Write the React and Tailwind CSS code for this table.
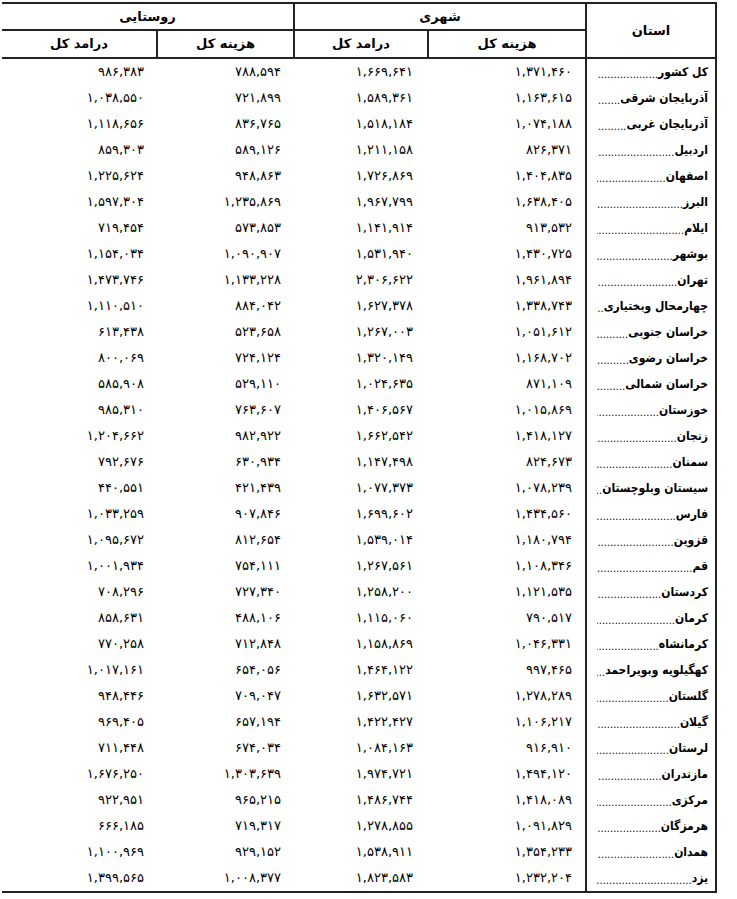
const fa = (s) => s.replace(/\d/g, (d) => "۰۱۲۳۴۵۶۷۸۹"[d]);

const rows = [
  ["کل کشور", "1,371,460", "1,669,641", "788,594", "986,383"],
  ["آذربایجان شرقی", "1,163,615", "1,589,361", "721,899", "1,038,550"],
  ["آذربایجان غربی", "1,074,188", "1,518,184", "836,765", "1,118,656"],
  ["اردبیل", "826,371", "1,211,158", "589,126", "859,303"],
  ["اصفهان", "1,404,835", "1,726,869", "948,863", "1,225,624"],
  ["البرز", "1,638,405", "1,967,799", "1,235,869", "1,597,304"],
  ["ایلام", "913,532", "1,141,914", "573,853", "719,454"],
  ["بوشهر", "1,430,725", "1,531,940", "1,090,907", "1,154,034"],
  ["تهران", "1,961,894", "2,306,622", "1,133,228", "1,473,746"],
  ["چهارمحال وبختیاری", "1,338,743", "1,627,378", "884,042", "1,110,510"],
  ["خراسان جنوبی", "1,051,612", "1,267,003", "523,658", "613,438"],
  ["خراسان رضوی", "1,168,702", "1,320,149", "724,124", "800,069"],
  ["خراسان شمالی", "871,109", "1,024,635", "529,110", "585,908"],
  ["خوزستان", "1,015,869", "1,406,567", "763,607", "985,310"],
  ["زنجان", "1,418,127", "1,662,542", "982,922", "1,204,662"],
  ["سمنان", "824,673", "1,147,498", "630,934", "792,676"],
  ["سیستان وبلوچستان", "1,078,239", "1,077,373", "421,439", "440,551"],
  ["فارس", "1,434,560", "1,699,602", "907,846", "1,033,259"],
  ["قزوین", "1,180,794", "1,539,014", "812,654", "1,095,672"],
  ["قم", "1,108,346", "1,267,561", "754,111", "1,001,934"],
  ["کردستان", "1,121,535", "1,258,200", "727,340", "708,296"],
  ["کرمان", "790,517", "1,115,060", "488,106", "858,631"],
  ["کرمانشاه", "1,046,331", "1,158,869", "712,848", "770,258"],
  ["کهگیلویه وبویراحمد", "997,465", "1,464,122", "654,056", "1,017,161"],
  ["گلستان", "1,278,289", "1,632,571", "709,047", "948,446"],
  ["گیلان", "1,106,217", "1,422,427", "657,194", "969,405"],
  ["لرستان", "916,910", "1,084,163", "674,034", "711,448"],
  ["مازندران", "1,494,120", "1,974,721", "1,303,639", "1,676,250"],
  ["مرکزی", "1,418,089", "1,486,744", "965,215", "922,951"],
  ["هرمزگان", "1,091,829", "1,278,855", "719,317", "666,185"],
  ["همدان", "1,354,233", "1,538,911", "929,152", "1,100,969"],
  ["یزد", "1,232,204", "1,823,583", "1,008,377", "1,399,565"],
];

// rough leader length so the dots fill the cell without spilling far past it
const leader = (name) => ".".repeat(Math.max(3, Math.min(34, Math.round((118 - name.length * 5.2) / 3.2))));

export default function App() {
  return (
    <div
      className="bg-white min-h-[899px] pt-[2px] pl-[2px] text-black"
      style={{ fontFamily: '"DejaVu Sans", sans-serif' }}
    >
      <div dir="rtl" className="w-[715px] border-t-2 border-r-2 border-b-2 border-[#222]">
        {/* header */}
        <div className="flex h-[55px] border-b-2 border-[#222] text-[13px] font-bold">
          <div className="w-[130px] border-l-2 border-[#222] flex items-center justify-center">
            استان
          </div>
          <div className="w-[292px] border-l-2 border-[#222] flex flex-col">
            <div className="h-[27px] border-b-2 border-[#222] flex items-center justify-center">
              شهری
            </div>
            <div className="flex flex-1">
              <div className="w-[158px] border-l-2 border-[#222] flex items-center justify-center">
                هزینه کل
              </div>
              <div className="flex-1 flex items-center justify-center">درامد کل</div>
            </div>
          </div>
          <div className="flex-1 flex flex-col">
            <div className="h-[27px] border-b-2 border-[#222] flex items-center justify-center">
              روستایی
            </div>
            <div className="flex flex-1">
              <div className="w-[137px] border-l-2 border-[#222] flex items-center justify-center">
                هزینه کل
              </div>
              <div className="flex-1 flex items-center justify-center">درامد کل</div>
            </div>
          </div>
        </div>

        {/* body */}
        {rows.map((r, i) => (
          <div key={i} className="flex h-[26px] text-[13px]">
            <div className="w-[130px] border-l-2 border-[#222] flex items-center pr-[7px] pl-[10px] overflow-hidden">
              <span
                className="font-bold whitespace-nowrap text-[12px]"
                style={{ fontFamily: '"DejaVu Sans Condensed", "DejaVu Sans", sans-serif' }}
              >
                {r[0]}
              </span>
              <span className="flex-1 min-w-0 overflow-hidden whitespace-nowrap text-[10px] leading-none pt-[6px]">
                {leader(r[0])}
              </span>
            </div>
            <div className="w-[158px] flex items-center pr-[13px]">{fa(r[1])}</div>
            <div className="w-[134px] flex items-center pr-[14px]">{fa(r[2])}</div>
            <div className="w-[137px] flex items-center pr-[12px]">{fa(r[3])}</div>
            <div className="flex-1 flex items-center pr-[12px]">{fa(r[4])}</div>
          </div>
        ))}
      </div>
    </div>
  );
}
